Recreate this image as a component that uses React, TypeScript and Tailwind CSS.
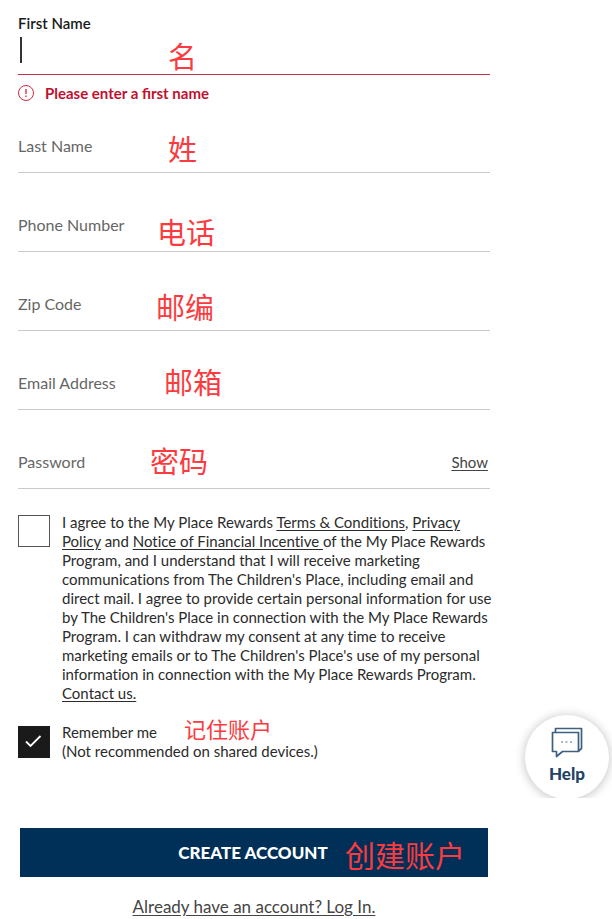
import type { FormEvent } from "react";
import { useState } from "react";

const noteClass =
  "pointer-events-none absolute font-['Noto_Sans_CJK_SC',sans-serif] leading-none whitespace-nowrap text-[#fb3b40]";

const fields = [
  { id: "lastName", label: "Last Name", type: "text", note: "姓", place: "left-[150px] top-1" },
  { id: "phone", label: "Phone Number", type: "tel", note: "电话", place: "left-[139px] top-2" },
  { id: "zip", label: "Zip Code", type: "text", note: "邮编", place: "left-[138px] top-1" },
  { id: "email", label: "Email Address", type: "email", note: "邮箱", place: "left-[146px] top-0" },
  { id: "password", label: "Password", type: "password", note: "密码", place: "left-[132px] top-0" },
];

function HelpIcon() {
  return (
    <svg width="32" height="31" viewBox="0 0 32 31" fill="none" stroke="#3d5f80" strokeWidth="1.700" strokeLinejoin="round">
      <path d="M4.500 5.500V1.500H30.500V21.500L27.500 24" />
      <path d="M1.500 5.500H27.500V24.500H11.500L5.500 29.500V24.500H1.500Z" />
      <path d="M10 15h2M14.500 15h2M19 15h2" stroke="#8aa0b6" strokeWidth="1.500" />
    </svg>
  );
}

export default function App() {
  const [agree, setAgree] = useState(false);
  const [remember, setRemember] = useState(true);
  const [showPassword, setShowPassword] = useState(false);

  const handleSubmit = (event: FormEvent<HTMLFormElement>) => {
    event.preventDefault();
  };

  return (
    <div className="flex bg-white font-['Lato','Noto_Sans_CJK_SC',sans-serif] text-[15px] text-[#2b2b2b]">
      <form noValidate onSubmit={handleSubmit} className="min-w-0 flex-1 pt-[13px] pl-[18px]">
        <div className="relative border-b border-[#c4304a]">
          <label htmlFor="firstName" className="block leading-5 font-semibold text-[#1a1a1a]">
            First Name
          </label>
          <div className="flex h-[41px] items-start pt-1 pl-[2px]">
            <span className="h-[26px] w-[2px] bg-[#333]" />
            <input
              id="firstName"
              type="text"
              aria-invalid="true"
              aria-describedby="firstNameError"
              className="h-7 min-w-0 flex-1 bg-transparent outline-none"
            />
          </div>
          <span className={`${noteClass} top-7 left-[150px] text-[29px]`}>名</span>
        </div>
        <p id="firstNameError" className="mt-2 flex items-center gap-[11px] leading-5 font-bold text-[#c0102f]">
          <svg width="16" height="16" viewBox="0 0 16 16" fill="none" stroke="#cc2b47">
            <circle cx="8" cy="8" r="7.500" />
            <path d="M8 4v5M8 10.500v1.500" strokeWidth="1.300" />
          </svg>
          Please enter a first name
        </p>

        <div className="mt-[27px] flex flex-col gap-9">
          {fields.map((field) => (
            <div key={field.id} className="relative flex items-center gap-3 border-b border-[#cacaca] pt-[6px] pb-4">
              <label htmlFor={field.id} className="text-base leading-5 text-[#666]">
                {field.label}
              </label>
              <input
                id={field.id}
                type={field.id === "password" && showPassword ? "text" : field.type}
                className="h-5 min-w-0 flex-1 bg-transparent outline-none"
              />
              {field.id === "password" && (
                <button
                  type="button"
                  onClick={() => setShowPassword(!showPassword)}
                  className="mr-[2px] leading-5 text-[#444] underline underline-offset-2"
                >
                  Show
                </button>
              )}
              <span className={`${noteClass} ${field.place} text-[29px]`}>{field.note}</span>
            </div>
          ))}
        </div>

        <div className="mt-6 flex items-start gap-3">
          <input
            id="agree"
            type="checkbox"
            checked={agree}
            onChange={(event) => setAgree(event.target.checked)}
            className="mt-[2px] size-8 shrink-0 appearance-none border border-[#555] bg-white checked:bg-[#1a1a1a]"
          />
          <label htmlFor="agree" className="leading-[19px] whitespace-nowrap [font-variant-ligatures:none]">
            I agree to the My Place Rewards{" "}
            <a href="#terms" className="underline underline-offset-2">Terms &amp; Conditions</a>,{" "}
            <a href="#privacy" className="underline underline-offset-2">Privacy<br />Policy</a> and{" "}
            <a href="#notice" className="underline underline-offset-2">Notice of Financial Incentive </a>
            of the My Place Rewards<br />
            Program, and I understand that I will receive marketing<br />
            communications from The Children's Place, including email and<br />
            direct mail. I agree to provide certain personal information for use<br />
            by The Children's Place in connection with the My Place Rewards<br />
            Program. I can withdraw my consent at any time to receive<br />
            marketing emails or to The Children's Place's use of my personal<br />
            information in connection with the My Place Rewards Program.<br />
            <a href="#contact" className="underline underline-offset-2">Contact us.</a>
          </label>
        </div>

        <div className="relative mt-5 flex items-start gap-3">
          <span className="relative mt-[3px] size-8 shrink-0">
            <input
              id="remember"
              type="checkbox"
              checked={remember}
              onChange={(event) => setRemember(event.target.checked)}
              className="block size-8 appearance-none border border-[#1a1a1a] bg-white checked:bg-[#1a1a1a]"
            />
            {remember && (
              <svg className="pointer-events-none absolute inset-0" width="32" height="32" viewBox="0 0 32 32" fill="none" stroke="#fff" strokeWidth="1.800">
                <path d="M8 15.500l4.500 4.500L22.500 10" />
              </svg>
            )}
          </span>
          <label htmlFor="remember" className="leading-[19px]">
            Remember me<br />
            (Not recommended on shared devices.)
          </label>
          <span className={`${noteClass} -top-[6px] left-[166px] text-[22px]`}>记住账户</span>
        </div>

        <div className="relative mx-[2px] mt-[67px]">
          <button type="submit" className="h-[49px] w-full bg-[#003057] pr-[2px] text-[17px] font-black text-white">
            CREATE ACCOUNT
          </button>
          <span className={`${noteClass} top-[11px] left-[325px] text-[30px]`}>创建账户</span>
        </div>
        <p className="mt-[19px] text-center">
          <a href="#login" className="block text-[17px] leading-[22px] text-[#444] underline underline-offset-2">
            Already have an account? Log In.
          </a>
        </p>
      </form>

      <aside className="flex w-[122px] shrink-0 flex-col justify-end pb-[120px]">
        <div className="flex h-[100px] justify-end overflow-hidden pt-[17px] pr-[3px]">
          <button
            type="button"
            className="flex size-[84px] shrink-0 flex-col items-center gap-1 rounded-full bg-white pt-3 text-[17px] leading-6 font-black text-[#1f4468] shadow-[0_1px_8px_2px_rgba(0,0,0,0.18)]"
          >
            <HelpIcon />
            Help
          </button>
        </div>
      </aside>
    </div>
  );
}
